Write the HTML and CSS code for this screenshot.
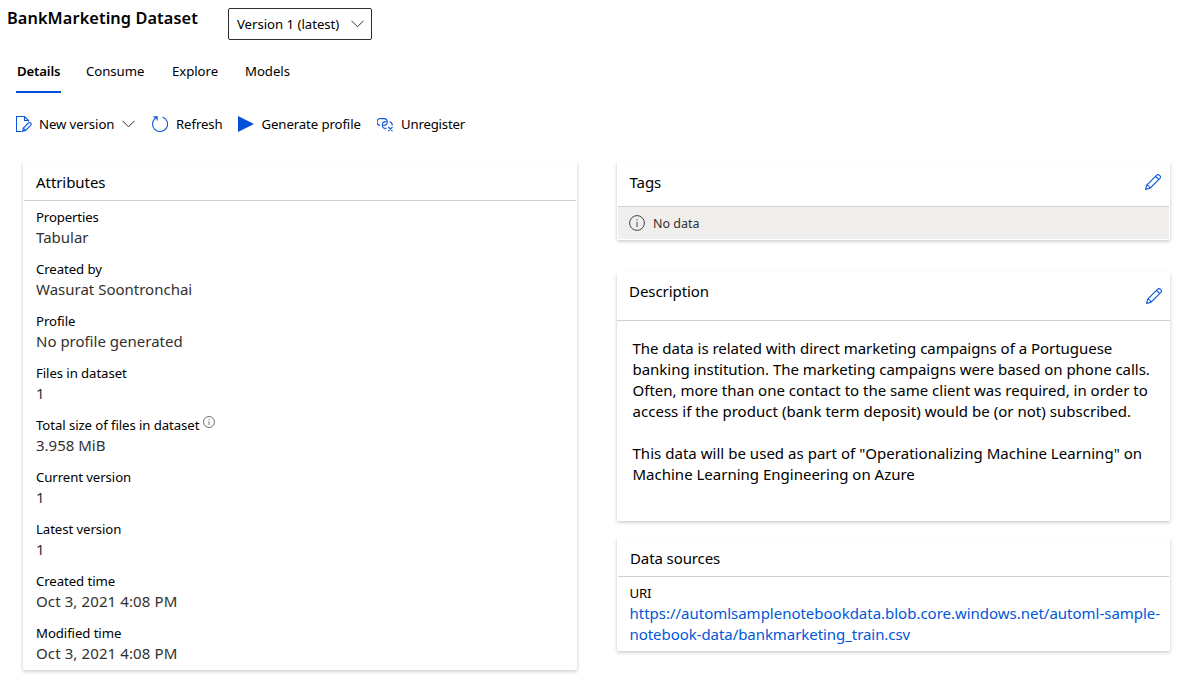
FILE: index.html
```html
<!DOCTYPE html>
<html lang="en">
<head>
<meta charset="utf-8">
<title>BankMarketing Dataset</title>
<link rel="stylesheet" href="styles.css">
</head>
<body>
<header class="header">
  <h1 class="title">BankMarketing Dataset</h1>
  <div class="select"><span>Version 1 (latest)</span>
    <svg class="chevron" viewBox="0 0 13 8" width="13" height="8"><path d="M.5.8 6.5 6.8 12.5.8"/></svg>
  </div>
</header>
<nav class="tabs">
  <a class="tab tab-active">Details</a>
  <a class="tab tab-consume">Consume</a>
  <a class="tab tab-explore">Explore</a>
  <a class="tab">Models</a>
</nav>
<div class="toolbar">
  <div class="tool tool-new">
    <svg class="icon" viewBox="0 0 16 16" width="16" height="16"><path d="M5.500 15.500H.5V.5H8.500L12.500 4.500V5.500M8.500.5V4.500H12.500"/><path d="M6.500 15.300 7.300 12.100 12.400 7Q13.500 6 14.600 7T14.700 9.300L9.600 14.400ZM7.300 12.100 9.600 14.400"/></svg>
    <span>New version</span>
    <svg class="chevron" viewBox="0 0 13 8" width="13" height="8"><path d="M.5.8 6.500 6.800 12.500.8"/></svg>
  </div>
  <div class="tool tool-refresh">
    <svg class="icon" viewBox="0 0 16 16" width="16" height="16"><path d="M10.500.9A7.500 7.500 0 1 1 4.500 1.400M1.500 .9H5.200V4.600"/></svg>
    <span>Refresh</span>
  </div>
  <div class="tool tool-generate">
    <svg class="play" viewBox="0 0 16 16" width="16" height="16"><path d="M0 0 16 8 0 16Z"/></svg>
    <span>Generate profile</span>
  </div>
  <div class="tool tool-unregister">
    <svg class="icon" viewBox="0 0 16 16" width="16" height="16"><path d="M3 9.400A3.400 3.400 0 0 1 3.900 2.600H6.800A3.400 3.400 0 0 1 7 9.400H6.200M9.500 12.400H8.700A3.400 3.400 0 0 1 8.700 5.600H9.500M12.500 5.800A3.400 3.400 0 0 1 15.200 9.500M11.300 11 15.500 15.200M15.500 11 11.300 15.200"/></svg>
    <span>Unregister</span>
  </div>
</div>
<main class="content">
  <section class="card attributes">
    <h2 class="card-head">Attributes</h2>
    <dl class="list">
      <div class="item"><dt>Properties</dt><dd>Tabular</dd></div>
      <div class="item"><dt>Created by</dt><dd>Wasurat Soontronchai</dd></div>
      <div class="item"><dt>Profile</dt><dd>No profile generated</dd></div>
      <div class="item"><dt>Files in dataset</dt><dd>1</dd></div>
      <div class="item"><dt>Total size of files in dataset<svg class="info info-small" viewBox="0 0 16 16" width="12" height="12"><circle cx="8" cy="8" r="7.300"/><path d="M8 6.800V12M8 4V5.400"/></svg></dt><dd>3.958 MiB</dd></div>
      <div class="item"><dt>Current version</dt><dd>1</dd></div>
      <div class="item"><dt>Latest version</dt><dd>1</dd></div>
      <div class="item"><dt>Created time</dt><dd class="date">Oct 3, 2021 4:08 PM</dd></div>
      <div class="item"><dt>Modified time</dt><dd class="date">Oct 3, 2021 4:08 PM</dd></div>
    </dl>
  </section>
  <div class="side">
    <section class="card tags">
      <h2 class="card-head">Tags
        <svg class="icon" viewBox="0 0 16 16" width="16" height="16"><path d="M.6 15.400 1.800 11 11.700 1.100Q13 0 14.600 1.400T14.900 4.300L5 14.200ZM1.800 11Q4.200 11.500 5 14.200M10.500 2.300 13.700 5.500"/></svg>
      </h2>
      <div class="empty">
        <svg class="info" viewBox="0 0 16 16" width="16" height="16"><circle cx="8" cy="8" r="7.400"/><path d="M8 6.800V12M8 4.200V5.300"/></svg>
        <span>No data</span>
      </div>
    </section>
    <section class="card description">
      <h2 class="card-head">Description
        <svg class="icon" viewBox="0 0 16 16" width="16" height="16"><path d="M.6 15.400 1.800 11 11.700 1.100Q13 0 14.600 1.400T14.900 4.300L5 14.200ZM1.800 11Q4.200 11.500 5 14.200M10.500 2.300 13.700 5.500"/></svg>
      </h2>
      <div class="text">
        <p><span class="tight">The data is related with direct marketing campaigns of a Portuguese</span><br><span class="tight">banking institution. The marketing campaigns were based on phone calls.</span><br>Often, more than one contact to the same client was required, in order to<br><span class="loose">access if the product (bank term deposit) would be (or not) subscribed.</span></p>
        <p><span class="loose">This data will be used as part of "Operationalizing Machine Learning" on</span><br>Machine Learning Engineering on Azure</p>
      </div>
    </section>
    <section class="card sources">
      <h2 class="card-head">Data sources</h2>
      <div class="uri">
        <div class="uri-label">URI</div>
        <a class="link">https://automlsamplenotebookdata.blob.core.windows.net/automl-sample-<br><span class="link-tail">notebook-data/bankmarketing_train.csv</span></a>
      </div>
    </section>
  </div>
</main>
</body>
</html>
```
FILE: styles.css
```css
* { box-sizing: border-box; }
body { margin: 0; width: 1193px; height: 692px; overflow: hidden; background: #fff; color: #000; font: 13.2px "Noto Sans", sans-serif; }
h1, h2, p, dl, dt, dd { margin: 0; font-weight: 400; }
svg { flex: none; display: block; fill: none; }
.header { display: flex; height: 48px; padding: 8px 0 0 7px; }
.title { width: 221px; font-size: 16.300px; font-weight: 600; line-height: 20px; letter-spacing: .1px; }
.select { display: flex; align-items: center; justify-content: space-between; width: 144px; height: 32px; padding: 0 7px 0 8px; border: 1px solid #323130; border-radius: 2px; letter-spacing: -.03px; }
.chevron { stroke: #333; stroke-width: 1; }
.tabs { display: flex; height: 46px; padding: 2px 0 0 16px; letter-spacing: -.05px; }
.tab { height: 43px; line-height: 42px; }
.tab-active { width: 45px; margin-right: 25px; padding-left: 1px; border-bottom: 2px solid #0050d8; font-weight: 600; letter-spacing: -.15px; }
.tab-consume { width: 86px; }
.tab-explore { width: 73px; }
.toolbar { display: flex; height: 60px; padding-left: 15.500px; align-items: center; letter-spacing: -.1px; }
.tool { display: flex; align-items: center; gap: 8px; }
.tool-new { width: 136.500px; }
.tool-new span { margin-left: -.5px; }
.tool-refresh { width: 85.500px; }
.tool-generate { width: 139.500px; }
.tool-unregister { letter-spacing: -.18px; }
.icon { stroke: #0b57d9; stroke-width: 1.100; }
.play { fill: #0050d8; }
.content { display: grid; grid-template-columns: 554px 553px; column-gap: 40px; align-items: start; padding: 8px 0 0 23px; }
.card { padding: 0 1px; background: #fff; box-shadow: 0 1.600px 3.600px rgba(0,0,0,.22), 0 .3px .9px rgba(0,0,0,.18); }
.card-head { display: flex; justify-content: space-between; height: 39px; padding: 0 8px 0 12px; border-bottom: 1px solid #d2d0ce; font-size: 15px; line-height: 40px; letter-spacing: -.06px; }
.attributes { height: 508px; }
.list { padding: 6px 0 0 12px; }
.item { height: 52px; }
.item dt { display: flex; height: 20px; line-height: 20px; letter-spacing: -.08px; }
.item:first-child dt { letter-spacing: -.14px; }
.item dd { height: 21px; line-height: 21px; font-size: 15px; color: #323130; }
.item .date { letter-spacing: .11px; }
.info { stroke: #444; stroke-width: 1; }
.info-small { margin: 1px 0 0 3.500px; }
.tags { height: 78px; margin-bottom: 32px; }
.tags .card-head { height: 45px; padding-left: 11.500px; }
.tags .icon { margin-top: 12px; }
.empty { display: flex; align-items: center; gap: 8px; height: 32px; padding-left: 11px; background: #f0efed; color: #323130; font-size: 12.500px; }
.description { height: 249px; margin-bottom: 17px; padding: 0; }
.description .card-head { height: 49px; line-height: 38px; }
.description .icon { margin-top: 16px; }
.text { padding: 17px 0 0 15.500px; font-size: 15px; line-height: 21px; white-space: nowrap; }
.text p + p { margin-top: 21px; }
.tight { letter-spacing: -.03px; }
.loose { letter-spacing: .03px; }
.sources { height: 113px; }
.sources .card-head { letter-spacing: -.1px; }
.uri { padding: 6px 0 0 11.500px; line-height: 20px; }
.uri-label { letter-spacing: -.2px; }
.link { display: block; color: #0058d8; font-size: 15px; line-height: 21px; letter-spacing: -.015px; white-space: nowrap; }
.link-tail { letter-spacing: -.06px; }
```
